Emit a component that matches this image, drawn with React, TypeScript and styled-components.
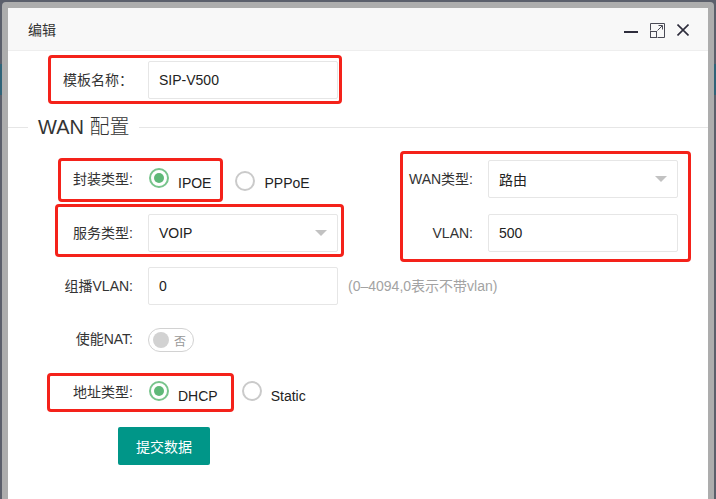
import React from "react";
import styled, { createGlobalStyle } from "styled-components";

const GlobalStyle = createGlobalStyle`
  html, body { margin: 0; padding: 0; height: 100%; overflow: hidden; }
  body {
    font-family: "Liberation Sans", "Noto Sans CJK SC", Arial, sans-serif;
    font-size: 14px;
    color: #333;
  }
  #root { height: 100%; }
  * { box-sizing: border-box; }
`;

const Backdrop = styled.div`
  height: 100%;
  padding: 2px 2px 0;
  background: linear-gradient(
    to bottom,
    #5b5f6b 0,
    #5b5f6b 64px,
    #2f6378 64px,
    #2f6378 95px,
    #5b5f6b 95px
  );
`;

const Frame = styled.div`
  height: 100%;
  padding: 6px 6px 0;
  background: #adadad;
  border-radius: 4px 4px 0 0;
`;

const Dialog = styled.div`
  height: 100%;
  background: #fff;
  display: flex;
  flex-direction: column;
`;

const TitleBar = styled.div`
  flex: none;
  height: 43px;
  display: flex;
  align-items: center;
  justify-content: space-between;
  padding: 0 19px 0 20px;
  background: #f8f8f8;
  border-bottom: 1px solid #eee;
`;

const Title = styled.span`
  font-size: 14px;
  color: #333;
`;

const Controls = styled.div`
  display: flex;
  align-items: center;
  padding-top: 2px;
`;

const ControlButton = styled.span<{ $gap?: number }>`
  display: flex;
  align-items: center;
  margin-left: ${(p) => p.$gap ?? 0}px;
  cursor: pointer;
`;

const Body = styled.div`
  flex: 1;
  padding-top: 10px;
`;

const TopItem = styled.div`
  position: relative;
  display: flex;
  margin-left: 30px;
`;

const Label = styled.label`
  flex: none;
  width: 110px;
  padding-right: 15px;
  text-align: right;
  line-height: 38px;
  color: #333;
  white-space: nowrap;
`;

const TextInput = styled.input`
  width: 190px;
  height: 38px;
  padding: 0 10px;
  border: 1px solid #e6e6e6;
  border-radius: 2px;
  font: inherit;
  color: #222;
  background: #fff;
  outline: none;
`;

const Select = styled.div`
  width: 190px;
  height: 38px;
  display: flex;
  align-items: center;
  justify-content: space-between;
  padding: 0 10px 0 10px;
  border: 1px solid #e6e6e6;
  border-radius: 2px;
  color: #222;
  background: #fff;
  cursor: pointer;
`;

const Caret = styled.i`
  width: 0;
  height: 0;
  border-left: 6px solid transparent;
  border-right: 6px solid transparent;
  border-top: 6px solid #c2c2c2;
`;

const LegendRow = styled.div`
  margin-top: 14px;
  height: 28px;
  display: flex;
  align-items: center;
`;

const Rule = styled.span<{ $grow?: boolean }>`
  height: 0;
  border-top: 1px solid #e6e6e6;
  ${(p) => (p.$grow ? "flex: 1;" : "width: 20px;")}
`;

const Legend = styled.span`
  padding: 0 10px;
  font-size: 20px;
  font-weight: 300;
  line-height: 28px;
  color: #333;
`;

const FieldBody = styled.div`
  padding: 19px 0 0 30px;
  display: grid;
  grid-template-columns: 340px 1fr;
  grid-template-rows: 39px 38px 38px 38px 39px 38px;
  row-gap: 15px;
`;

const FormItem = styled.div<{ $wide?: boolean }>`
  position: relative;
  display: flex;
  align-items: flex-start;
  ${(p) => (p.$wide ? "grid-column: 1 / -1;" : "grid-column: 1;")}
`;

const SideGroup = styled.div`
  position: relative;
  grid-column: 2;
  grid-row: 1 / 3;
  display: grid;
  grid-template-rows: 39px 38px;
  row-gap: 15px;
`;

const RadioOption = styled.span`
  display: flex;
  align-items: flex-start;
  padding-left: 1px;
  margin-right: 23px;
  cursor: pointer;
`;

const RadioIcon = styled.span<{ $on?: boolean; $drop?: number }>`
  flex: none;
  width: 20px;
  height: 20px;
  margin-top: ${(p) => 8 + (p.$drop ?? 0)}px;
  border-radius: 50%;
  border: 2px solid ${(p) => (p.$on ? "#78c48c" : "#cacaca")};
  display: flex;
  align-items: center;
  justify-content: center;
  &::after {
    content: "";
    display: ${(p) => (p.$on ? "block" : "none")};
    width: 10px;
    height: 10px;
    border-radius: 50%;
    background: #5fb878;
  }
`;

const RadioText = styled.span`
  margin: 13px 0 0 9px;
  line-height: 20px;
  color: #222;
`;

const Hint = styled.span`
  margin-left: 10px;
  line-height: 38px;
  color: #a3a3a3;
  white-space: nowrap;
`;

const Switch = styled.span`
  margin-top: 8px;
  width: 46px;
  height: 24px;
  display: flex;
  align-items: center;
  padding-left: 4px;
  border: 1px solid #d2d2d2;
  border-radius: 20px;
  background: #fff;
  cursor: pointer;
`;

const Knob = styled.span`
  width: 16px;
  height: 16px;
  border-radius: 50%;
  background: #d2d2d2;
`;

const SwitchText = styled.em`
  margin-left: 5px;
  font-style: normal;
  font-size: 12px;
  color: #999;
`;

const SubmitButton = styled.button`
  margin-left: 80px;
  height: 38px;
  padding: 0 18px;
  border: none;
  border-radius: 2px;
  background: #009688;
  color: #fff;
  font: inherit;
  font-size: 14px;
  cursor: pointer;
`;

const Mark = styled.span<{ $x: number; $y: number; $w: number; $h: number }>`
  position: absolute;
  left: ${(p) => p.$x}px;
  top: ${(p) => p.$y}px;
  width: ${(p) => p.$w}px;
  height: ${(p) => p.$h}px;
  border: 3px solid #f4221a;
  border-radius: 4px;
  pointer-events: none;
  z-index: 2;
`;

const MinimizeIcon = () => (
  <svg width="14" height="16" viewBox="0 0 14 16">
    <rect x="0" y="9" width="14" height="2" fill="#2e2d3c" />
  </svg>
);

const MaximizeIcon = () => (
  <svg width="15" height="15" viewBox="0 0 15 15" fill="none" stroke="#4a4a55" strokeWidth="1">
    <path d="M0.5 7.5 V0.5 H14.5 V14.5 H7.5" />
    <rect x="0.5" y="8.5" width="6" height="6" />
    <path d="M7.5 7.5 L12 3" />
    <path d="M8.5 2.5 H12.5 V6.5" />
  </svg>
);

const CloseIcon = () => (
  <svg width="12" height="12" viewBox="0 0 12 12" stroke="#2e2d3c" strokeWidth="1.6">
    <path d="M0.5 0.5 L11.5 11.5 M11.5 0.5 L0.5 11.5" />
  </svg>
);

export default function App() {
  return (
    <>
      <GlobalStyle />
      <Backdrop>
        <Frame>
          <Dialog>
            <TitleBar>
              <Title>编辑</Title>
              <Controls>
                <ControlButton>
                  <MinimizeIcon />
                </ControlButton>
                <ControlButton $gap={12}>
                  <MaximizeIcon />
                </ControlButton>
                <ControlButton $gap={12}>
                  <CloseIcon />
                </ControlButton>
              </Controls>
            </TitleBar>

            <Body>
              <TopItem>
                <Label>模板名称：</Label>
                <TextInput defaultValue="SIP-V500" />
                <Mark $x={10} $y={-6} $w={294} $h={49} />
              </TopItem>

              <LegendRow>
                <Rule />
                <Legend>WAN 配置</Legend>
                <Rule $grow />
              </LegendRow>

              <FieldBody>
                <FormItem>
                  <Label>封装类型:</Label>
                  <RadioOption>
                    <RadioIcon $on />
                    <RadioText>IPOE</RadioText>
                  </RadioOption>
                  <RadioOption>
                    <RadioIcon $drop={3} />
                    <RadioText>PPPoE</RadioText>
                  </RadioOption>
                  <Mark $x={20} $y={-2} $w={165} $h={44} />
                </FormItem>

                <FormItem>
                  <Label>服务类型:</Label>
                  <Select>
                    <span>VOIP</span>
                    <Caret />
                  </Select>
                  <Mark $x={17} $y={-10} $w={289} $h={53} />
                </FormItem>

                <SideGroup>
                  <FormItem>
                    <Label>WAN类型:</Label>
                    <Select>
                      <span>路由</span>
                      <Caret />
                    </Select>
                  </FormItem>
                  <FormItem>
                    <Label>VLAN:</Label>
                    <TextInput defaultValue="500" />
                  </FormItem>
                  <Mark $x={22} $y={-9} $w={291} $h={111} />
                </SideGroup>

                <FormItem $wide>
                  <Label>组播VLAN:</Label>
                  <TextInput defaultValue="0" />
                  <Hint>(0–4094,0表示不带vlan)</Hint>
                </FormItem>

                <FormItem $wide>
                  <Label>使能NAT:</Label>
                  <Switch>
                    <Knob />
                    <SwitchText>否</SwitchText>
                  </Switch>
                </FormItem>

                <FormItem $wide>
                  <Label>地址类型:</Label>
                  <RadioOption>
                    <RadioIcon $on />
                    <RadioText>DHCP</RadioText>
                  </RadioOption>
                  <RadioOption>
                    <RadioIcon />
                    <RadioText>Static</RadioText>
                  </RadioOption>
                  <Mark $x={9} $y={0} $w={187} $h={39} />
                </FormItem>

                <FormItem $wide>
                  <SubmitButton type="button">提交数据</SubmitButton>
                </FormItem>
              </FieldBody>
            </Body>
          </Dialog>
        </Frame>
      </Backdrop>
    </>
  );
}
